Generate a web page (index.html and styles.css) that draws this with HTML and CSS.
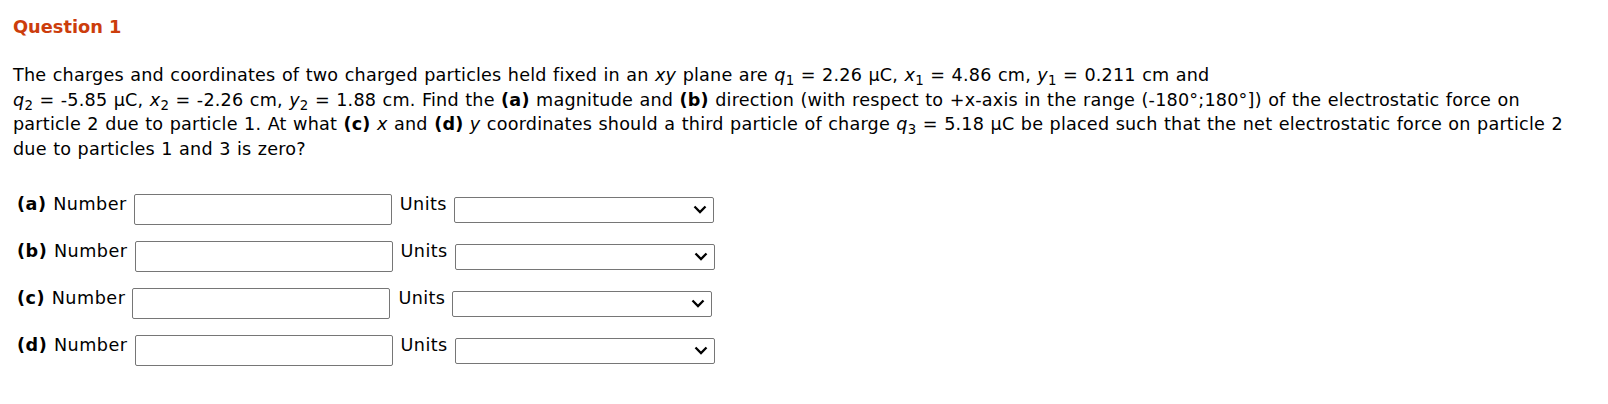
FILE: index.html
```html
<!DOCTYPE html>
<html lang="en">
<head>
<meta charset="utf-8">
<title>Question 1</title>
<link rel="stylesheet" href="styles.css">
</head>
<body>
<div class="page">
  <h2 class="title">Question 1</h2>
  <p class="question">The charges and coordinates of two charged particles held fixed in an <i>xy</i> plane are <i>q</i><sub>1</sub> = 2.26 µC, <i>x</i><sub>1</sub> = 4.86 cm, <i>y</i><sub>1</sub> = 0.211 cm and<br><i>q</i><sub>2</sub> = -5.85 µC, <i>x</i><sub>2</sub> = -2.26 cm, <i>y</i><sub>2</sub> = 1.88 cm. Find the <b>(a)</b> magnitude and <b>(b)</b> direction (with respect to +x-axis in the range (-180°;180°]) of the electrostatic force on particle 2 due to particle 1. At what <b>(c)</b> <i>x</i> and <b>(d)</b> <i>y</i> coordinates should a third particle of charge <i>q</i><sub>3</sub> = 5.18 µC be placed such that the net electrostatic force on particle 2 due to particles 1 and 3 is zero?</p>
  <div class="answers">
    <div class="row">
      <span class="lbl"><b>(a)</b> Number</span>
      <input class="num" type="text">
      <span class="units">Units</span>
      <span class="select-wrap">
        <select class="unit-select"><option></option></select>
        <svg class="chev" width="14" height="9" viewBox="0 0 14 9"><path d="M1.5 1.5 L7 7 L12.5 1.5" fill="none" stroke="#000" stroke-width="2.3"/></svg>
      </span>
    </div>
    <div class="row">
      <span class="lbl"><b>(b)</b> Number</span>
      <input class="num" type="text">
      <span class="units">Units</span>
      <span class="select-wrap">
        <select class="unit-select"><option></option></select>
        <svg class="chev" width="14" height="9" viewBox="0 0 14 9"><path d="M1.5 1.5 L7 7 L12.5 1.5" fill="none" stroke="#000" stroke-width="2.3"/></svg>
      </span>
    </div>
    <div class="row">
      <span class="lbl"><b>(c)</b> Number</span>
      <input class="num" type="text">
      <span class="units">Units</span>
      <span class="select-wrap">
        <select class="unit-select"><option></option></select>
        <svg class="chev" width="14" height="9" viewBox="0 0 14 9"><path d="M1.5 1.5 L7 7 L12.5 1.5" fill="none" stroke="#000" stroke-width="2.3"/></svg>
      </span>
    </div>
    <div class="row">
      <span class="lbl"><b>(d)</b> Number</span>
      <input class="num" type="text">
      <span class="units">Units</span>
      <span class="select-wrap">
        <select class="unit-select"><option></option></select>
        <svg class="chev" width="14" height="9" viewBox="0 0 14 9"><path d="M1.5 1.5 L7 7 L12.5 1.5" fill="none" stroke="#000" stroke-width="2.3"/></svg>
      </span>
    </div>
  </div>
</div>
</body>
</html>
```
FILE: styles.css
```css
html, body {
  margin: 0;
  padding: 0;
  background: #fff;
}
body {
  font-family: "DejaVu Sans", Verdana, sans-serif;
  color: #000;
}
.page {
  padding: 16px 30px 0 13px;
}
.title {
  margin: 0;
  font-size: 17.8px;
  line-height: 22px;
  font-weight: bold;
  color: #cc3d0c;
}
.question {
  margin: 25px 0 0 0;
  font-size: 17.6px;
  line-height: 24.5px;
  letter-spacing: 0.2px;
  word-spacing: 0.6px;
}
.question sub {
  font-size: 0.76em;
  line-height: 0;
  vertical-align: -4px;
}
.answers {
  margin-top: 33px;
  padding-left: 4px;
}
.row {
  display: flex;
  align-items: flex-start;
  height: 31px;
  margin-bottom: 16px;
  font-size: 17.6px;
  line-height: 20px;
  letter-spacing: 0.2px;
  word-spacing: 0.6px;
}
.lbl {
  margin-right: 7px;
  letter-spacing: 0.5px;
}
.num {
  box-sizing: border-box;
  width: 258px;
  height: 31px;
  margin: 0;
  padding: 0 4px;
  border: 1px solid #767676;
  border-radius: 2px;
  background: #fff;
}
.units {
  margin: 0 7px 0 8px;
  letter-spacing: 0.4px;
}
.select-wrap {
  position: relative;
  display: block;
  margin-top: 3px;
}
.unit-select {
  display: block;
  box-sizing: border-box;
  width: 260px;
  height: 26px;
  margin: 0;
  border: 1px solid #767676;
  border-radius: 2px;
  background: #fff;
  -webkit-appearance: none;
  appearance: none;
}
.chev {
  position: absolute;
  right: 7px;
  top: 8px;
  pointer-events: none;
}
```
